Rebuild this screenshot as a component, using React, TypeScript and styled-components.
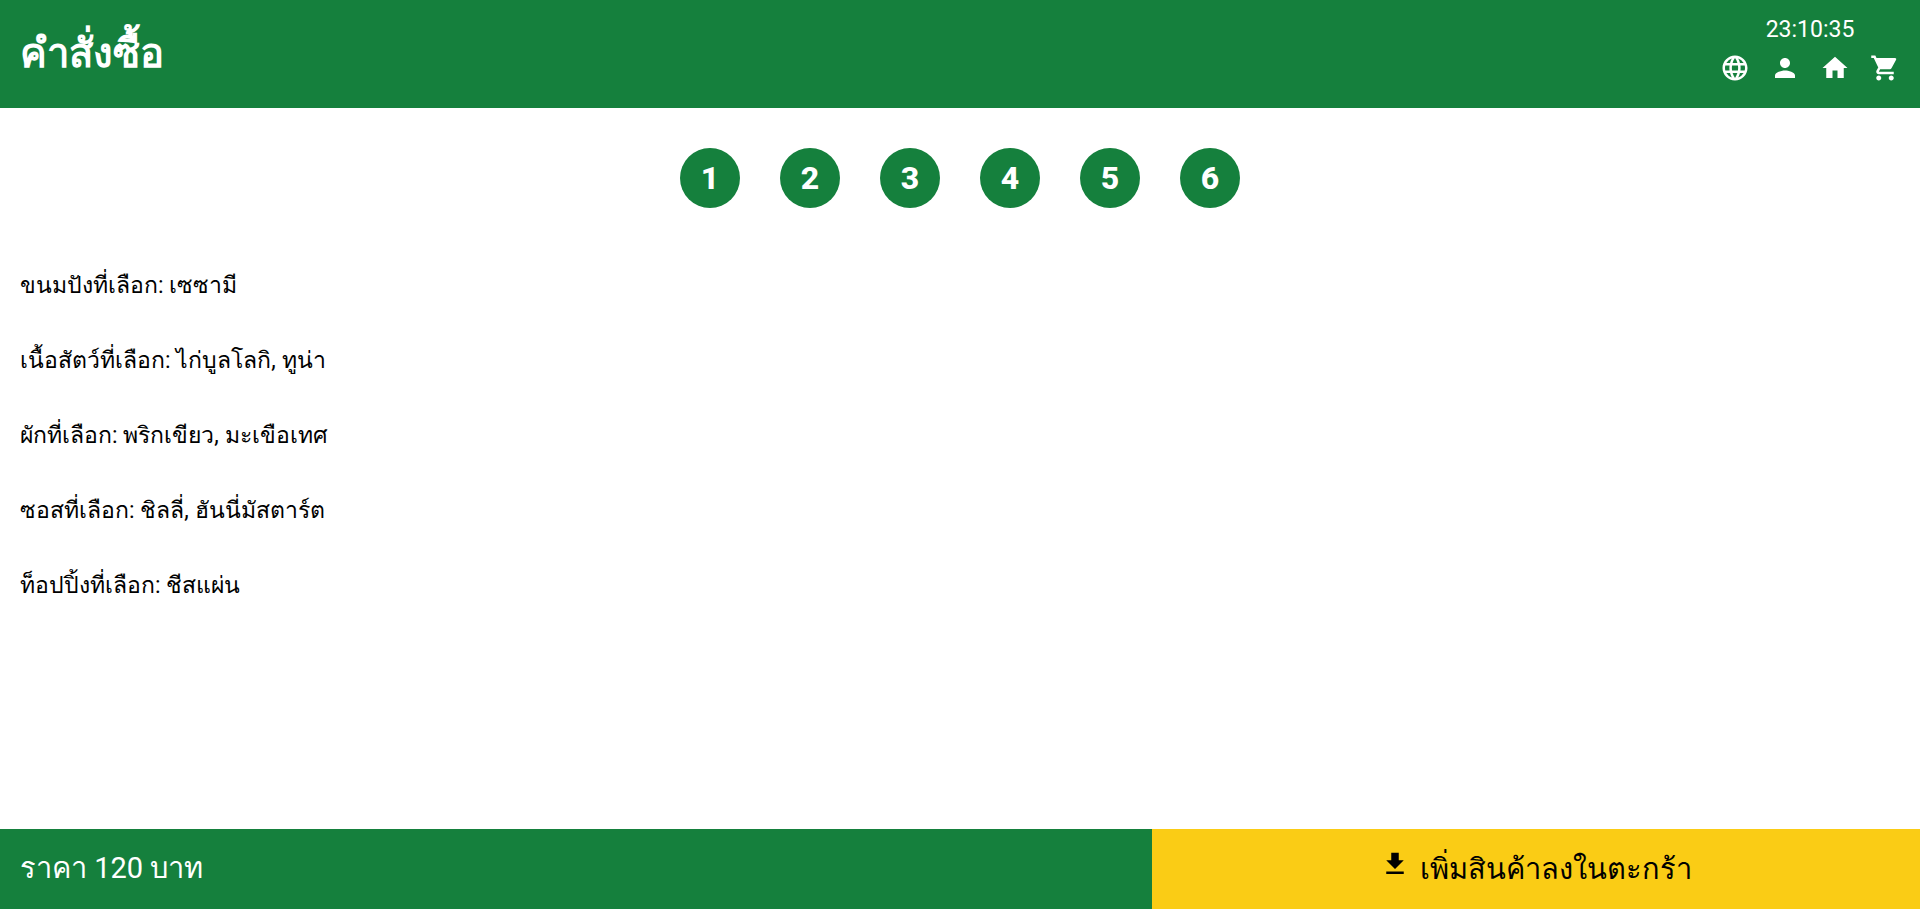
import React from "react";
import styled, { createGlobalStyle } from "styled-components";
import { MdLanguage, MdPerson, MdHome, MdShoppingCart, MdFileDownload } from "react-icons/md";

const GlobalStyle = createGlobalStyle`
  *, *::before, *::after { box-sizing: border-box; }
  body {
    margin: 0;
    background: #fff;
    color: #000;
    font-family: Roboto, sans-serif;
    font-size: 16px;
    line-height: 24px;
  }
`;

const Page = styled.div`
  display: flex;
  flex-direction: column;
  min-height: 100vh;
`;

const Header = styled.header`
  display: flex;
  align-items: center;
  justify-content: space-between;
  padding: 0 20px;
  background: #15803d;
  color: #fff;
`;

const Title = styled.h1`
  margin: 0;
  font-size: 40px;
  line-height: 48px;
  font-weight: 700;
`;

const Tools = styled.div`
  display: flex;
  flex-direction: column;
  align-items: center;
  gap: 5px;
  padding: 12px 0 25px;
`;

const Clock = styled.time`
  font-size: 23px;
  line-height: 36px;
`;

const IconBar = styled.nav`
  display: flex;
  gap: 20px;
`;

const IconButton = styled.button`
  display: flex;
  padding: 0;
  border: 0;
  background: none;
  color: inherit;
  font-size: 30px;
  cursor: pointer;
`;

const Main = styled.main`
  flex: 1;
`;

const Steps = styled.nav`
  display: flex;
  justify-content: center;
  gap: 40px;
  padding: 40px 20px;
`;

const Step = styled.button`
  width: 60px;
  height: 60px;
  padding: 0;
  border: 0;
  border-radius: 50%;
  background: #15803d;
  color: #fff;
  font-family: inherit;
  font-size: 32px;
  line-height: 36px;
  font-weight: 800;
  cursor: pointer;
`;

const Summary = styled.div`
  display: flex;
  flex-direction: column;
  gap: 40px;
  padding: 20px;
`;

const Choice = styled.p`
  margin: 0;
  font-size: 23px;
  line-height: 35px;
`;

const Footer = styled.footer`
  display: grid;
  grid-template-columns: 3fr 2fr;
`;

const Price = styled.div`
  padding: 20px;
  background: #15803d;
  color: #fff;
  font-size: 29px;
  line-height: 39px;
`;

const AddButton = styled.button`
  display: flex;
  align-items: baseline;
  justify-content: center;
  gap: 10px;
  padding: 20px;
  border: 0;
  background: #facc15;
  color: #000;
  font-family: inherit;
  font-size: 29px;
  line-height: 39px;
  cursor: pointer;
`;

const tools = [
  { label: "ภาษา", Icon: MdLanguage },
  { label: "บัญชี", Icon: MdPerson },
  { label: "หน้าแรก", Icon: MdHome },
  { label: "ตะกร้า", Icon: MdShoppingCart },
];

const choices = [
  "ขนมปังที่เลือก: เซซามี",
  "เนื้อสัตว์ที่เลือก: ไก่บูลโลกิ, ทูน่า",
  "ผักที่เลือก: พริกเขียว, มะเขือเทศ",
  "ซอสที่เลือก: ชิลลี่, ฮันนี่มัสตาร์ต",
  "ท็อปปิ้งที่เลือก: ชีสแผ่น",
];

export default function App() {
  return (
    <Page>
      <GlobalStyle />
      <Header>
        <Title>คำสั่งซื้อ</Title>
        <Tools>
          <Clock>23:10:35</Clock>
          <IconBar>
            {tools.map(({ label, Icon }) => (
              <IconButton key={label} type="button" aria-label={label}>
                <Icon />
              </IconButton>
            ))}
          </IconBar>
        </Tools>
      </Header>
      <Main>
        <Steps>
          {[1, 2, 3, 4, 5, 6].map((n) => (
            <Step key={n} type="button">{n}</Step>
          ))}
        </Steps>
        <Summary>
          {choices.map((text) => (
            <Choice key={text}>{text}</Choice>
          ))}
        </Summary>
      </Main>
      <Footer>
        <Price>ราคา 120 บาท</Price>
        <AddButton type="button">
          <MdFileDownload size={30} />
          <span>เพิ่มสินค้าลงในตะกร้า</span>
        </AddButton>
      </Footer>
    </Page>
  );
}
